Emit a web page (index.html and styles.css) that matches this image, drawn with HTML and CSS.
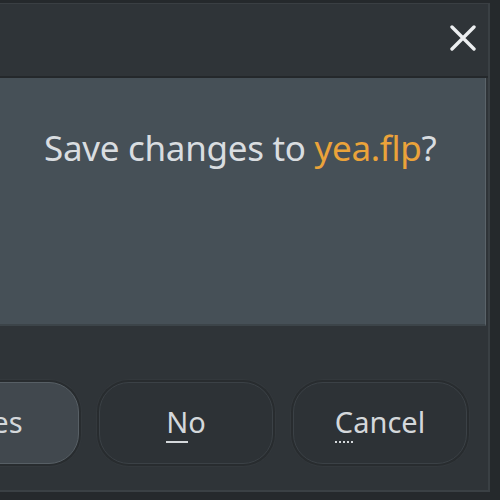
FILE: index.html
```html
<!DOCTYPE html>
<html lang="en">
<head>
    <meta charset="UTF-8">
    <title>Save changes</title>
    <link rel="stylesheet" href="styles.css">
</head>
<body>
    <div class="window">
        <div class="titlebar">
            <button class="close" title="Close">
                <svg width="26" height="26" viewBox="0 0 26 26">
                    <path d="M2 2 L24 24 M24 2 L2 24" stroke="#eceef0" stroke-width="3.4" stroke-linecap="round"/>
                </svg>
            </button>
        </div>
        <div class="panel">
            <p class="message">Save changes to <span class="file">yea.flp</span>?</p>
        </div>
        <div class="buttons">
            <button class="btn btn-default">Yes</button>
            <button class="btn"><span class="key">N</span>o</button>
            <button class="btn"><span class="key dotted">C</span>ancel</button>
        </div>
    </div>
</body>
</html>
```

FILE: styles.css
```css
body {
    margin: 0;
    background-color: #25292c;
    font-family: "Noto Sans", "Open Sans", sans-serif;
    overflow: hidden;
}
.window {
    width: 488px;
    height: 486px;
    margin-top: 3px;
    background-color: #2f3438;
    border-top: 1px solid #3a3f43;
    border-right: 2px solid #3a4044;
    border-bottom: 2px solid #3a4044;
    overflow: hidden;
}
.titlebar {
    height: 72px;
    display: flex;
    justify-content: flex-end;
    align-items: center;
    padding-right: 12px;
    border-bottom: 2px solid #24282b;
}
.close {
    background: none;
    border: none;
    padding: 0;
    width: 26px;
    height: 26px;
    margin-top: -4px;
}
.panel {
    height: 248px;
    width: 486px;
    background-color: #465057;
    border-right: 1px solid #5a6369;
    border-bottom: 2px solid #3c4449;
    box-sizing: border-box;
}
.message {
    margin: 0;
    padding: 46px 0 0 44px;
    font-size: 35px;
    color: #d9dde0;
    letter-spacing: -0.3px;
}
.file {
    color: #eba33a;
}
.buttons {
    display: flex;
    gap: 20px;
    margin-top: 56px;
    margin-left: -95px;
}
.btn {
    width: 174px;
    height: 82px;
    border-radius: 30px;
    background-color: #2d3236;
    border: 1px solid #3b4146;
    box-shadow: 0 0 0 2px #282c2f, 0 0 0 3px #33383c;
    color: #d4d8db;
    font-family: "Noto Sans", "Open Sans", sans-serif;
    font-size: 29px;
    padding: 0 0 4px 0;
}
.btn-default {
    background-color: #41484e;
    border-color: #575f65;
    padding-left: 16px;
}
.key {
    border-bottom: 2px solid #d4d8db;
}
.key.dotted {
    border-bottom: 2px dotted #d4d8db;
}
```
